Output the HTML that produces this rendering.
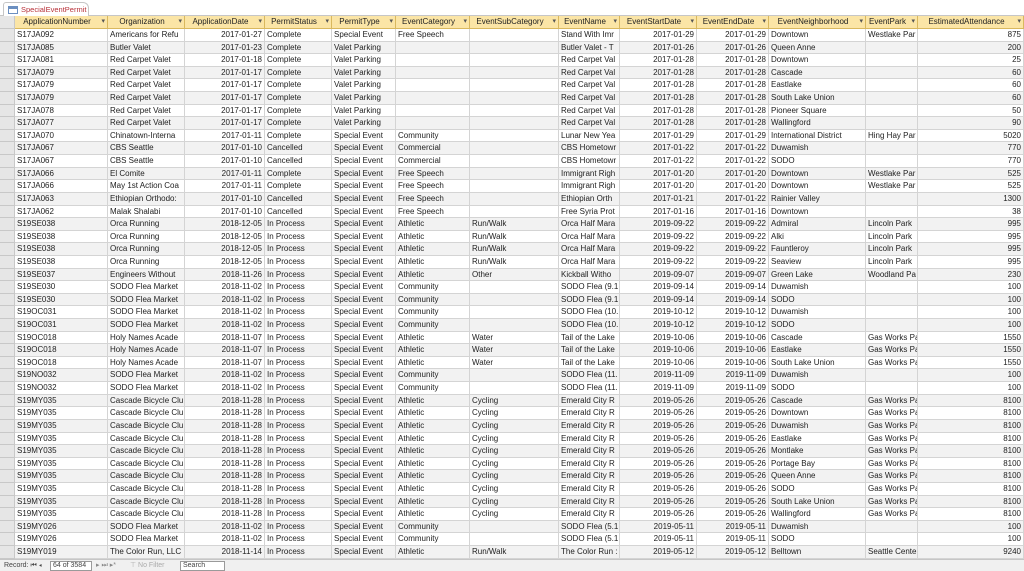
<!DOCTYPE html>
<html><head><meta charset="utf-8"><style>
*{margin:0;padding:0;box-sizing:border-box}
body{width:1024px;height:571px;overflow:hidden;background:#fff;font-family:"Liberation Sans",sans-serif;font-size:8px;color:#222;position:relative}
.top{position:absolute;left:0;top:0;width:1024px;height:16px;background:#fff;border-bottom:1px solid #c6c6c6}
.tab{position:absolute;left:3px;top:2px;width:86px;height:15px;background:#fff;border:1px solid #c6c6c6;border-bottom:none;border-radius:3px 6px 0 0;color:#b8323a;font-size:7.5px;line-height:13px;padding-left:17px}
.tab i{position:absolute;left:4px;top:3px;width:10px;height:8px;border:1px solid #6b8fc0;background:linear-gradient(#6b8fc0 0 2px,#fff 2px);}
.grid{position:absolute;left:0;top:16px;width:1024px}
.r{display:flex;height:12.62px;line-height:12px}
.r span{flex:none;overflow:hidden;white-space:nowrap;border-right:1px solid #d4d4d4;border-bottom:1px solid #d4d4d4;padding:0 2px}
.r:nth-child(even){background:#f2f2f2}
.r:nth-child(odd){background:#fff}
.r span:nth-child(1){width:15px;background:#e6e6e6;border-color:#c8c8c8}
.r span:nth-child(2){width:93px}.r span:nth-child(3){width:77px}.r span:nth-child(4){width:80px;text-align:right}
.r span:nth-child(5){width:67px}.r span:nth-child(6){width:64px}.r span:nth-child(7){width:74px}
.r span:nth-child(8){width:89px}.r span:nth-child(9){width:61px}.r span:nth-child(10){width:77px;text-align:right}
.r span:nth-child(11){width:72px;text-align:right}.r span:nth-child(12){width:97px}.r span:nth-child(13){width:52px}
.r span:nth-child(14){width:106px;text-align:right}
.h{display:flex;height:13px;line-height:12px;background:#fbe5a6}
.h span{flex:none;border-right:1px solid #d9b85e;border-bottom:1px solid #d9b85e;text-align:center;position:relative;padding-right:8px;overflow:hidden;white-space:nowrap}
.h span:after{content:"▾";position:absolute;right:2px;top:0;font-size:7px;color:#555}
.h span:first-child{background:#e6e6e6;border-color:#c8c8c8;padding:0}
.h span:first-child:after{content:""}
.sb{position:absolute;left:0;top:559px;width:1024px;height:12px;background:#f0f0f0;border-top:1px solid #c6c6c6;font-size:7px;line-height:11px;color:#444}
.sb b{font-weight:normal;position:absolute;top:0}
.box{border:1px solid #9a9a9a;background:#fff;height:10px;top:1px!important;line-height:8px;padding-left:2px}
</style></head><body>
<div class="top"><div class="tab"><i></i>SpecialEventPermit</div></div>
<div class="grid">
<div class="h"><span style="width:15px"></span><span style="width:93px">ApplicationNumber</span><span style="width:77px">Organization</span><span style="width:80px">ApplicationDate</span><span style="width:67px">PermitStatus</span><span style="width:64px">PermitType</span><span style="width:74px">EventCategory</span><span style="width:89px">EventSubCategory</span><span style="width:61px">EventName</span><span style="width:77px">EventStartDate</span><span style="width:72px">EventEndDate</span><span style="width:97px">EventNeighborhood</span><span style="width:52px">EventPark</span><span style="width:106px">EstimatedAttendance</span></div>
<div>
<div class="r"><span></span><span>S17JA092</span><span>Americans for Refu</span><span>2017-01-27</span><span>Complete</span><span>Special Event</span><span>Free Speech</span><span></span><span>Stand With Imr</span><span>2017-01-29</span><span>2017-01-29</span><span>Downtown</span><span>Westlake Par</span><span>875</span></div>
<div class="r"><span></span><span>S17JA085</span><span>Butler Valet</span><span>2017-01-23</span><span>Complete</span><span>Valet Parking</span><span></span><span></span><span>Butler Valet - T</span><span>2017-01-26</span><span>2017-01-26</span><span>Queen Anne</span><span></span><span>200</span></div>
<div class="r"><span></span><span>S17JA081</span><span>Red Carpet Valet</span><span>2017-01-18</span><span>Complete</span><span>Valet Parking</span><span></span><span></span><span>Red Carpet Val</span><span>2017-01-28</span><span>2017-01-28</span><span>Downtown</span><span></span><span>25</span></div>
<div class="r"><span></span><span>S17JA079</span><span>Red Carpet Valet</span><span>2017-01-17</span><span>Complete</span><span>Valet Parking</span><span></span><span></span><span>Red Carpet Val</span><span>2017-01-28</span><span>2017-01-28</span><span>Cascade</span><span></span><span>60</span></div>
<div class="r"><span></span><span>S17JA079</span><span>Red Carpet Valet</span><span>2017-01-17</span><span>Complete</span><span>Valet Parking</span><span></span><span></span><span>Red Carpet Val</span><span>2017-01-28</span><span>2017-01-28</span><span>Eastlake</span><span></span><span>60</span></div>
<div class="r"><span></span><span>S17JA079</span><span>Red Carpet Valet</span><span>2017-01-17</span><span>Complete</span><span>Valet Parking</span><span></span><span></span><span>Red Carpet Val</span><span>2017-01-28</span><span>2017-01-28</span><span>South Lake Union</span><span></span><span>60</span></div>
<div class="r"><span></span><span>S17JA078</span><span>Red Carpet Valet</span><span>2017-01-17</span><span>Complete</span><span>Valet Parking</span><span></span><span></span><span>Red Carpet Val</span><span>2017-01-28</span><span>2017-01-28</span><span>Pioneer Square</span><span></span><span>50</span></div>
<div class="r"><span></span><span>S17JA077</span><span>Red Carpet Valet</span><span>2017-01-17</span><span>Complete</span><span>Valet Parking</span><span></span><span></span><span>Red Carpet Val</span><span>2017-01-28</span><span>2017-01-28</span><span>Wallingford</span><span></span><span>90</span></div>
<div class="r"><span></span><span>S17JA070</span><span>Chinatown-Interna</span><span>2017-01-11</span><span>Complete</span><span>Special Event</span><span>Community</span><span></span><span>Lunar New Yea</span><span>2017-01-29</span><span>2017-01-29</span><span>International District</span><span>Hing Hay Par</span><span>5020</span></div>
<div class="r"><span></span><span>S17JA067</span><span>CBS Seattle</span><span>2017-01-10</span><span>Cancelled</span><span>Special Event</span><span>Commercial</span><span></span><span>CBS Hometowr</span><span>2017-01-22</span><span>2017-01-22</span><span>Duwamish</span><span></span><span>770</span></div>
<div class="r"><span></span><span>S17JA067</span><span>CBS Seattle</span><span>2017-01-10</span><span>Cancelled</span><span>Special Event</span><span>Commercial</span><span></span><span>CBS Hometowr</span><span>2017-01-22</span><span>2017-01-22</span><span>SODO</span><span></span><span>770</span></div>
<div class="r"><span></span><span>S17JA066</span><span>El Comite</span><span>2017-01-11</span><span>Complete</span><span>Special Event</span><span>Free Speech</span><span></span><span>Immigrant Righ</span><span>2017-01-20</span><span>2017-01-20</span><span>Downtown</span><span>Westlake Par</span><span>525</span></div>
<div class="r"><span></span><span>S17JA066</span><span>May 1st Action Coa</span><span>2017-01-11</span><span>Complete</span><span>Special Event</span><span>Free Speech</span><span></span><span>Immigrant Righ</span><span>2017-01-20</span><span>2017-01-20</span><span>Downtown</span><span>Westlake Par</span><span>525</span></div>
<div class="r"><span></span><span>S17JA063</span><span>Ethiopian Orthodo:</span><span>2017-01-10</span><span>Cancelled</span><span>Special Event</span><span>Free Speech</span><span></span><span>Ethiopian Orth</span><span>2017-01-21</span><span>2017-01-22</span><span>Rainier Valley</span><span></span><span>1300</span></div>
<div class="r"><span></span><span>S17JA062</span><span>Malak Shalabi</span><span>2017-01-10</span><span>Cancelled</span><span>Special Event</span><span>Free Speech</span><span></span><span>Free Syria Prot</span><span>2017-01-16</span><span>2017-01-16</span><span>Downtown</span><span></span><span>38</span></div>
<div class="r"><span></span><span>S19SE038</span><span>Orca Running</span><span>2018-12-05</span><span>In Process</span><span>Special Event</span><span>Athletic</span><span>Run/Walk</span><span>Orca Half Mara</span><span>2019-09-22</span><span>2019-09-22</span><span>Admiral</span><span>Lincoln Park</span><span>995</span></div>
<div class="r"><span></span><span>S19SE038</span><span>Orca Running</span><span>2018-12-05</span><span>In Process</span><span>Special Event</span><span>Athletic</span><span>Run/Walk</span><span>Orca Half Mara</span><span>2019-09-22</span><span>2019-09-22</span><span>Alki</span><span>Lincoln Park</span><span>995</span></div>
<div class="r"><span></span><span>S19SE038</span><span>Orca Running</span><span>2018-12-05</span><span>In Process</span><span>Special Event</span><span>Athletic</span><span>Run/Walk</span><span>Orca Half Mara</span><span>2019-09-22</span><span>2019-09-22</span><span>Fauntleroy</span><span>Lincoln Park</span><span>995</span></div>
<div class="r"><span></span><span>S19SE038</span><span>Orca Running</span><span>2018-12-05</span><span>In Process</span><span>Special Event</span><span>Athletic</span><span>Run/Walk</span><span>Orca Half Mara</span><span>2019-09-22</span><span>2019-09-22</span><span>Seaview</span><span>Lincoln Park</span><span>995</span></div>
<div class="r"><span></span><span>S19SE037</span><span>Engineers Without</span><span>2018-11-26</span><span>In Process</span><span>Special Event</span><span>Athletic</span><span>Other</span><span>Kickball Witho</span><span>2019-09-07</span><span>2019-09-07</span><span>Green Lake</span><span>Woodland Pa</span><span>230</span></div>
<div class="r"><span></span><span>S19SE030</span><span>SODO Flea Market</span><span>2018-11-02</span><span>In Process</span><span>Special Event</span><span>Community</span><span></span><span>SODO Flea (9.1</span><span>2019-09-14</span><span>2019-09-14</span><span>Duwamish</span><span></span><span>100</span></div>
<div class="r"><span></span><span>S19SE030</span><span>SODO Flea Market</span><span>2018-11-02</span><span>In Process</span><span>Special Event</span><span>Community</span><span></span><span>SODO Flea (9.1</span><span>2019-09-14</span><span>2019-09-14</span><span>SODO</span><span></span><span>100</span></div>
<div class="r"><span></span><span>S19OC031</span><span>SODO Flea Market</span><span>2018-11-02</span><span>In Process</span><span>Special Event</span><span>Community</span><span></span><span>SODO Flea (10.</span><span>2019-10-12</span><span>2019-10-12</span><span>Duwamish</span><span></span><span>100</span></div>
<div class="r"><span></span><span>S19OC031</span><span>SODO Flea Market</span><span>2018-11-02</span><span>In Process</span><span>Special Event</span><span>Community</span><span></span><span>SODO Flea (10.</span><span>2019-10-12</span><span>2019-10-12</span><span>SODO</span><span></span><span>100</span></div>
<div class="r"><span></span><span>S19OC018</span><span>Holy Names Acade</span><span>2018-11-07</span><span>In Process</span><span>Special Event</span><span>Athletic</span><span>Water</span><span>Tail of the Lake</span><span>2019-10-06</span><span>2019-10-06</span><span>Cascade</span><span>Gas Works Pa</span><span>1550</span></div>
<div class="r"><span></span><span>S19OC018</span><span>Holy Names Acade</span><span>2018-11-07</span><span>In Process</span><span>Special Event</span><span>Athletic</span><span>Water</span><span>Tail of the Lake</span><span>2019-10-06</span><span>2019-10-06</span><span>Eastlake</span><span>Gas Works Pa</span><span>1550</span></div>
<div class="r"><span></span><span>S19OC018</span><span>Holy Names Acade</span><span>2018-11-07</span><span>In Process</span><span>Special Event</span><span>Athletic</span><span>Water</span><span>Tail of the Lake</span><span>2019-10-06</span><span>2019-10-06</span><span>South Lake Union</span><span>Gas Works Pa</span><span>1550</span></div>
<div class="r"><span></span><span>S19NO032</span><span>SODO Flea Market</span><span>2018-11-02</span><span>In Process</span><span>Special Event</span><span>Community</span><span></span><span>SODO Flea (11.</span><span>2019-11-09</span><span>2019-11-09</span><span>Duwamish</span><span></span><span>100</span></div>
<div class="r"><span></span><span>S19NO032</span><span>SODO Flea Market</span><span>2018-11-02</span><span>In Process</span><span>Special Event</span><span>Community</span><span></span><span>SODO Flea (11.</span><span>2019-11-09</span><span>2019-11-09</span><span>SODO</span><span></span><span>100</span></div>
<div class="r"><span></span><span>S19MY035</span><span>Cascade Bicycle Clu</span><span>2018-11-28</span><span>In Process</span><span>Special Event</span><span>Athletic</span><span>Cycling</span><span>Emerald City R</span><span>2019-05-26</span><span>2019-05-26</span><span>Cascade</span><span>Gas Works Pa</span><span>8100</span></div>
<div class="r"><span></span><span>S19MY035</span><span>Cascade Bicycle Clu</span><span>2018-11-28</span><span>In Process</span><span>Special Event</span><span>Athletic</span><span>Cycling</span><span>Emerald City R</span><span>2019-05-26</span><span>2019-05-26</span><span>Downtown</span><span>Gas Works Pa</span><span>8100</span></div>
<div class="r"><span></span><span>S19MY035</span><span>Cascade Bicycle Clu</span><span>2018-11-28</span><span>In Process</span><span>Special Event</span><span>Athletic</span><span>Cycling</span><span>Emerald City R</span><span>2019-05-26</span><span>2019-05-26</span><span>Duwamish</span><span>Gas Works Pa</span><span>8100</span></div>
<div class="r"><span></span><span>S19MY035</span><span>Cascade Bicycle Clu</span><span>2018-11-28</span><span>In Process</span><span>Special Event</span><span>Athletic</span><span>Cycling</span><span>Emerald City R</span><span>2019-05-26</span><span>2019-05-26</span><span>Eastlake</span><span>Gas Works Pa</span><span>8100</span></div>
<div class="r"><span></span><span>S19MY035</span><span>Cascade Bicycle Clu</span><span>2018-11-28</span><span>In Process</span><span>Special Event</span><span>Athletic</span><span>Cycling</span><span>Emerald City R</span><span>2019-05-26</span><span>2019-05-26</span><span>Montlake</span><span>Gas Works Pa</span><span>8100</span></div>
<div class="r"><span></span><span>S19MY035</span><span>Cascade Bicycle Clu</span><span>2018-11-28</span><span>In Process</span><span>Special Event</span><span>Athletic</span><span>Cycling</span><span>Emerald City R</span><span>2019-05-26</span><span>2019-05-26</span><span>Portage Bay</span><span>Gas Works Pa</span><span>8100</span></div>
<div class="r"><span></span><span>S19MY035</span><span>Cascade Bicycle Clu</span><span>2018-11-28</span><span>In Process</span><span>Special Event</span><span>Athletic</span><span>Cycling</span><span>Emerald City R</span><span>2019-05-26</span><span>2019-05-26</span><span>Queen Anne</span><span>Gas Works Pa</span><span>8100</span></div>
<div class="r"><span></span><span>S19MY035</span><span>Cascade Bicycle Clu</span><span>2018-11-28</span><span>In Process</span><span>Special Event</span><span>Athletic</span><span>Cycling</span><span>Emerald City R</span><span>2019-05-26</span><span>2019-05-26</span><span>SODO</span><span>Gas Works Pa</span><span>8100</span></div>
<div class="r"><span></span><span>S19MY035</span><span>Cascade Bicycle Clu</span><span>2018-11-28</span><span>In Process</span><span>Special Event</span><span>Athletic</span><span>Cycling</span><span>Emerald City R</span><span>2019-05-26</span><span>2019-05-26</span><span>South Lake Union</span><span>Gas Works Pa</span><span>8100</span></div>
<div class="r"><span></span><span>S19MY035</span><span>Cascade Bicycle Clu</span><span>2018-11-28</span><span>In Process</span><span>Special Event</span><span>Athletic</span><span>Cycling</span><span>Emerald City R</span><span>2019-05-26</span><span>2019-05-26</span><span>Wallingford</span><span>Gas Works Pa</span><span>8100</span></div>
<div class="r"><span></span><span>S19MY026</span><span>SODO Flea Market</span><span>2018-11-02</span><span>In Process</span><span>Special Event</span><span>Community</span><span></span><span>SODO Flea (5.1</span><span>2019-05-11</span><span>2019-05-11</span><span>Duwamish</span><span></span><span>100</span></div>
<div class="r"><span></span><span>S19MY026</span><span>SODO Flea Market</span><span>2018-11-02</span><span>In Process</span><span>Special Event</span><span>Community</span><span></span><span>SODO Flea (5.1</span><span>2019-05-11</span><span>2019-05-11</span><span>SODO</span><span></span><span>100</span></div>
<div class="r"><span></span><span>S19MY019</span><span>The Color Run, LLC</span><span>2018-11-14</span><span>In Process</span><span>Special Event</span><span>Athletic</span><span>Run/Walk</span><span>The Color Run :</span><span>2019-05-12</span><span>2019-05-12</span><span>Belltown</span><span>Seattle Cente</span><span>9240</span></div>
</div></div>
<div class="sb">
<b style="left:4px">Record: ⏮ ◂</b>
<b class="box" style="left:50px;width:42px">64 of 3584</b>
<b style="left:96px;color:#888">▸ ⏭ ▸*</b>
<b style="left:130px;color:#aaa">⊤ No Filter</b>
<b class="box" style="left:180px;width:45px">Search</b>
</div>
</body></html>
